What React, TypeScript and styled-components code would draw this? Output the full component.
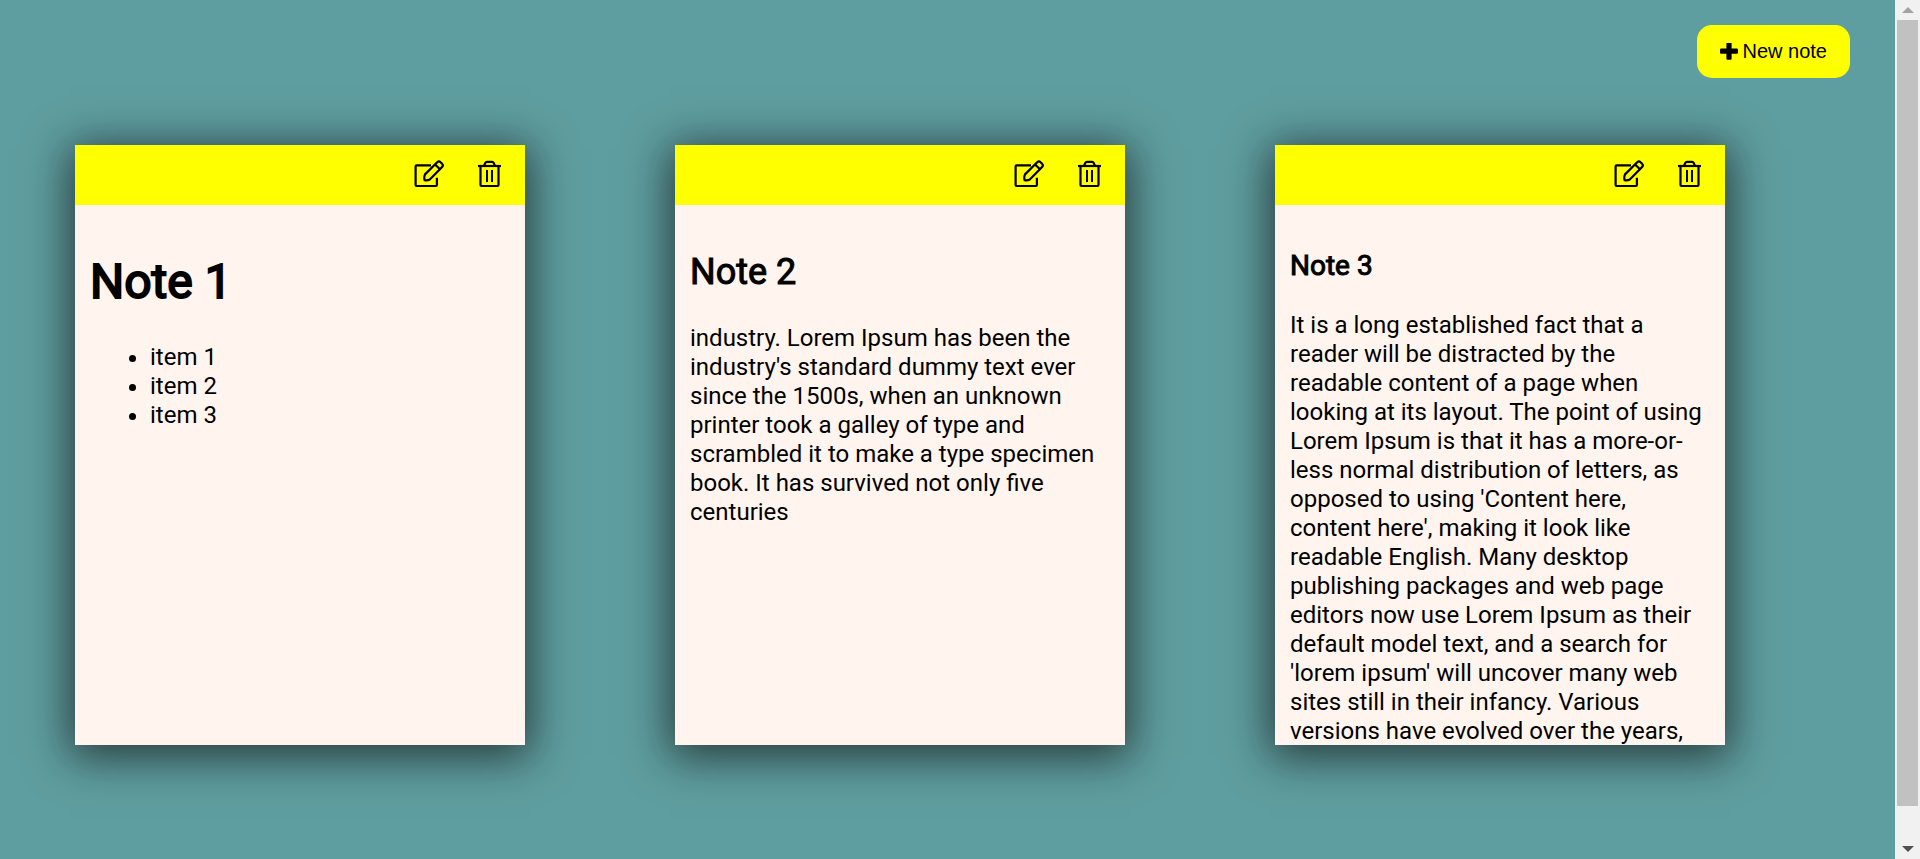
import React from "react";
import styled, { createGlobalStyle } from "styled-components";

const GlobalStyle = createGlobalStyle`
  *, *::before, *::after {
    box-sizing: border-box;
  }
  body {
    margin: 0;
    background: cadetblue;
    color: #000;
    font-family: Roboto, sans-serif;
    font-size: 24px;
    line-height: 29px;
  }
`;

const Shell = styled.div`
  display: flex;
  height: 100vh;
  overflow: hidden;
`;

const Page = styled.main`
  flex: 1;
  min-width: 0;
  overflow: hidden;
`;

const Toolbar = styled.header`
  display: flex;
  justify-content: flex-end;
  padding: 25px 45px 0;
`;

const NewNoteButton = styled.button`
  display: flex;
  align-items: center;
  gap: 5px;
  padding: 15px 23px;
  border: 0;
  border-radius: 15px;
  background: yellow;
  color: #000;
  font-family: "Liberation Sans", Arial, sans-serif;
  font-size: 20px;
  line-height: 23px;
  cursor: pointer;
`;

const Board = styled.section`
  display: flex;
  flex-wrap: wrap;
  gap: 150px;
  padding: 67px 75px;
`;

const Card = styled.article`
  display: flex;
  flex-direction: column;
  width: 450px;
  height: 600px;
  background: #fff5ee;
  box-shadow: 0 7px 42px 5px rgba(16, 16, 16, 0.7);
`;

const CardBar = styled.div`
  flex: none;
  display: flex;
  align-items: center;
  justify-content: flex-end;
  gap: 30px;
  height: 60px;
  padding: 0 21px;
  background: yellow;
`;

const IconButton = styled.button`
  display: flex;
  padding: 0;
  border: 0;
  background: none;
  color: #000;
  cursor: pointer;
`;

const CardBody = styled.div`
  flex: 1;
  min-height: 0;
  overflow: hidden;
  padding: 16px 15px 0;

  h1, h2, h3 {
    font-weight: 400;
    -webkit-text-stroke: 1px currentColor;
  }
  h1 {
    margin: 32px 0;
    font-size: 48px;
    line-height: 58px;
    -webkit-text-stroke-width: 2px;
  }
  h2 {
    margin: 30px 0;
    font-size: 36px;
    line-height: 43px;
  }
  h3 {
    margin: 28px 0;
    font-size: 28px;
    line-height: 34px;
  }
  p {
    margin: 24px 0;
  }
  ul {
    margin: 24px 0;
    padding-left: 60px;
  }
`;

const Rail = styled.aside`
  flex: none;
  display: flex;
  flex-direction: column;
  width: 25px;
  padding: 0 2px;
  background: #f1f1f1;
`;

const RailArrow = styled.div<{ $color: string }>`
  flex: none;
  display: flex;
  align-items: center;
  justify-content: center;
  height: 20px;
  color: ${(p) => p.$color};
`;

const RailTrack = styled.div`
  flex: 1;
`;

const RailThumb = styled.div`
  height: 96%;
  background: #c1c1c1;
`;

const PlusIcon = () => (
  <svg width="18" height="18" viewBox="0 0 18 18" fill="currentColor" aria-hidden="true">
    <rect x="0" y="5.5" width="18" height="5.2" rx="1.2" />
    <rect x="6.4" y="-0.5" width="5.2" height="17.2" rx="1" />
  </svg>
);

const EditIcon = () => (
  <svg width="30" height="30" viewBox="0 0 30 30" fill="none" stroke="currentColor" strokeWidth="2.2" strokeLinejoin="round" aria-hidden="true">
    <path d="M17 5.3H2.6a1 1 0 0 0-1 1V25a1 1 0 0 0 1 1h19.3a1 1 0 0 0 1-1v-7.2" />
    <path d="M10.6 20.2q-.8-3 .4-5.8L23.2 2.2q1.7-1.5 3.4 0l1.5 1.5q1.5 1.7 0 3.3L15.8 19.6q-2.4 1.2-5.2.6z" />
    <path d="M21.2 4.6l4.8 4.6" />
  </svg>
);

const TrashIcon = () => (
  <svg width="30" height="30" viewBox="0 0 30 30" fill="none" stroke="currentColor" strokeWidth="2.2" strokeLinejoin="round" aria-hidden="true">
    <path d="M4 6h23" />
    <path d="M6.5 6v19a1 1 0 0 0 1 1h16a1 1 0 0 0 1-1V6" />
    <path d="M10 6l1.3-3.1q.5-1 1.5-1h5.4q1 0 1.5 1L21 6" />
    <path d="M13 10v12M18 10v12" strokeWidth="2" />
  </svg>
);

const Note = ({ children }: { children: React.ReactNode }) => (
  <Card>
    <CardBar>
      <IconButton type="button" aria-label="Edit note">
        <EditIcon />
      </IconButton>
      <IconButton type="button" aria-label="Delete note">
        <TrashIcon />
      </IconButton>
    </CardBar>
    <CardBody>{children}</CardBody>
  </Card>
);

export default function App() {
  return (
    <Shell>
      <GlobalStyle />
      <Page>
        <Toolbar>
          <NewNoteButton type="button">
            <PlusIcon />
            New note
          </NewNoteButton>
        </Toolbar>
        <Board>
          <Note>
            <h1>Note 1</h1>
            <ul>
              <li>item 1</li>
              <li>item 2</li>
              <li>item 3</li>
            </ul>
          </Note>
          <Note>
            <h2>Note 2</h2>
            <p>
              industry. Lorem Ipsum has been the industry's standard dummy text
              ever since the 1500s, when an unknown printer took a galley of
              type and scrambled it to make a type specimen book. It has
              survived not only five centuries
            </p>
          </Note>
          <Note>
            <h3>Note 3</h3>
            <p>
              It is a long established fact that a reader will be distracted by
              the readable content of a page when looking at its layout. The
              point of using Lorem Ipsum is that it has a more-or-less normal
              distribution of letters, as opposed to using 'Content here,
              content here', making it look like readable English. Many desktop
              publishing packages and web page editors now use Lorem Ipsum as
              their default model text, and a search for 'lorem ipsum' will
              uncover many web sites still in their infancy. Various versions
              have evolved over the years,
            </p>
          </Note>
        </Board>
      </Page>
      <Rail aria-hidden="true">
        <RailArrow $color="#a3a3a3">
          <svg width="12" height="6" viewBox="0 0 12 6">
            <path d="M0 6L6 0L12 6z" fill="currentColor" />
          </svg>
        </RailArrow>
        <RailTrack>
          <RailThumb />
        </RailTrack>
        <RailArrow $color="#505050">
          <svg width="12" height="6" viewBox="0 0 12 6">
            <path d="M0 0L6 6L12 0z" fill="currentColor" />
          </svg>
        </RailArrow>
      </Rail>
    </Shell>
  );
}
